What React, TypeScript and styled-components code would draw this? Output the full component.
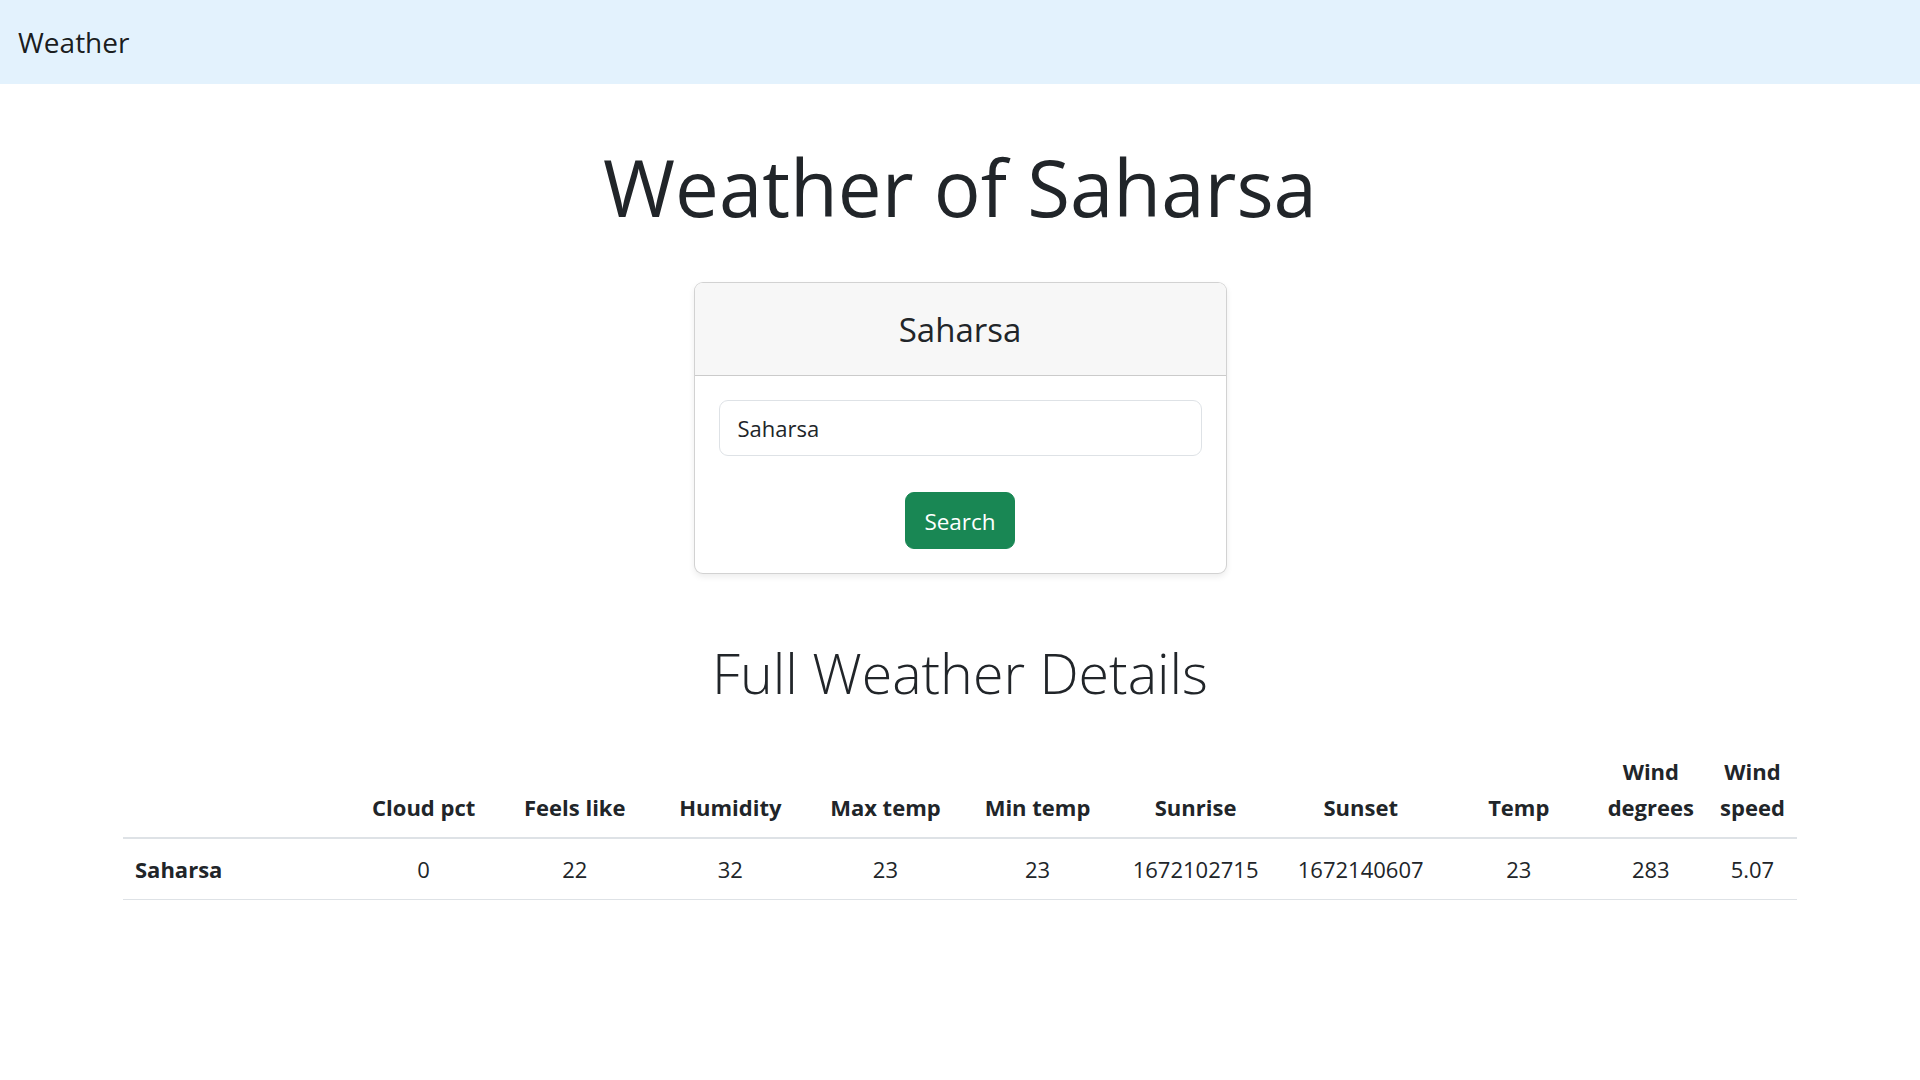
import React from "react";
import styled, { createGlobalStyle } from "styled-components";

const GlobalStyle = createGlobalStyle`
  html, body { margin: 0; padding: 0; }
  body {
    font-family: "Open Sans", "Noto Sans", "Liberation Sans", sans-serif;
    color: #212529;
    background: #ffffff;
    -webkit-font-smoothing: antialiased;
  }
  * { box-sizing: border-box; }
`;

const NavBar = styled.nav`
  height: 84px;
  background: #e3f2fd;
  display: flex;
  align-items: center;
  padding: 0 18px;
`;

const Brand = styled.a`
  font-size: 28px;
  line-height: 45px;
  color: rgba(0, 0, 0, 0.9);
  text-decoration: none;
`;

const Container = styled.main`
  width: 1710px;
  margin: 0 auto;
  padding: 0 18px;
`;

const Title = styled.h1`
  margin: 53px 0 0;
  text-align: center;
  font-size: 78px;
  font-weight: 400;
  line-height: 100px;
  color: #212529;
`;

const Card = styled.section`
  width: 533px;
  margin: 45px auto 0;
  border: 1px solid rgba(0, 0, 0, 0.175);
  border-radius: 9px;
  background: #fff;
  box-shadow: 0 3px 6px rgba(0, 0, 0, 0.075);
  overflow: hidden;
`;

const CardHeader = styled.div`
  padding: 25px 24px 24px;
  background: #f7f7f7;
  border-bottom: 1px solid rgba(0, 0, 0, 0.175);
  text-align: center;
`;

const CardTitle = styled.h4`
  margin: 0;
  font-size: 33px;
  font-weight: 400;
  line-height: 43px;
`;

const CardBody = styled.form`
  padding: 24px;
  display: flex;
  flex-direction: column;
  align-items: center;
  gap: 36px;
`;

const Input = styled.input`
  width: 100%;
  height: 56px;
  padding: 9px 18px;
  font-family: inherit;
  font-size: 22px;
  color: #212529;
  border: 1px solid #dee2e6;
  border-radius: 9px;
  outline: none;
  background: #fff;
`;

const Button = styled.button`
  height: 57px;
  padding: 2px 18px 0;
  font-family: inherit;
  font-size: 22.5px;
  color: #fff;
  background: #198754;
  border: 1px solid #198754;
  border-radius: 9px;
  cursor: pointer;
`;

const SubTitle = styled.h2`
  margin: 63px 0 0;
  text-align: center;
  font-size: 55.5px;
  font-weight: 300;
  line-height: 72px;
  color: #212529;
`;

const Table = styled.table`
  width: 100%;
  margin-top: 32px;
  border-collapse: collapse;
  table-layout: fixed;
  font-size: 22px;
  line-height: 36px;
  color: #212529;
`;

const HeadCell = styled.th`
  padding: 12px;
  font-weight: 700;
  text-align: center;
  vertical-align: bottom;
  border-bottom: 2px solid #dee2e6;
`;

const RowHead = styled.th`
  padding: 12px;
  font-weight: 700;
  text-align: left;
  border-bottom: 1px solid #dee2e6;
`;

const Cell = styled.td`
  padding: 12px;
  text-align: center;
  border-bottom: 1px solid #dee2e6;
`;

const columns: { label: string; width: number }[] = [
  { label: "Cloud pct", width: 149 },
  { label: "Feels like", width: 153 },
  { label: "Humidity", width: 158 },
  { label: "Max temp", width: 152 },
  { label: "Min temp", width: 152 },
  { label: "Sunrise", width: 164 },
  { label: "Sunset", width: 166 },
  { label: "Temp", width: 150 },
  { label: "Wind degrees", width: 114 },
  { label: "Wind speed", width: 89 },
];

const values = ["0", "22", "32", "23", "23", "1672102715", "1672140607", "23", "283", "5.07"];

export default function App() {
  return (
    <>
      <GlobalStyle />
      <NavBar>
        <Brand href="#">Weather</Brand>
      </NavBar>
      <Container>
        <Title>Weather of Saharsa</Title>
        <Card>
          <CardHeader>
            <CardTitle>Saharsa</CardTitle>
          </CardHeader>
          <CardBody onSubmit={(e) => e.preventDefault()}>
            <Input type="text" defaultValue="Saharsa" />
            <Button type="submit">Search</Button>
          </CardBody>
        </Card>
        <SubTitle>Full Weather Details</SubTitle>
        <Table>
          <colgroup>
            <col style={{ width: 226 }} />
            {columns.map((c, i) => (
              <col key={i} style={{ width: c.width }} />
            ))}
          </colgroup>
          <thead>
            <tr>
              <HeadCell />
              {columns.map((c, i) => (
                <HeadCell key={i}>{c.label}</HeadCell>
              ))}
            </tr>
          </thead>
          <tbody>
            <tr>
              <RowHead>Saharsa</RowHead>
              {values.map((v, i) => (
                <Cell key={i}>{v}</Cell>
              ))}
            </tr>
          </tbody>
        </Table>
      </Container>
    </>
  );
}
